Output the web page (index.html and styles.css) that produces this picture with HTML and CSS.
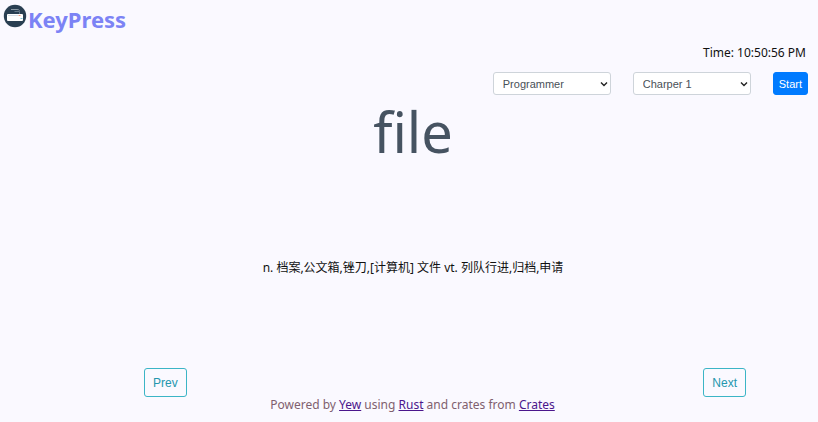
FILE: index.html
```html
<!DOCTYPE html>
<html lang="en">
<head>
<meta charset="utf-8">
<title>KeyPress</title>
<link rel="stylesheet" href="styles.css">
</head>
<body>
<header class="brand">
  <svg class="logo" viewBox="0 0 24 24" aria-hidden="true">
    <circle cx="12" cy="12" r="11.2" fill="#293f52"/>
    <path d="M8 5.500h6q2 0 2.500 1" fill="none" stroke="#8b99a5" stroke-width="1"/>
    <path d="M11.500 7.500h5v2.500" fill="none" stroke="#65798a" stroke-width="1"/>
    <rect x="4" y="10" width="16" height="7" rx="1" fill="#fff"/>
    <path d="M5 11.500h10" stroke="#d6dde5" stroke-width="1"/>
    <path d="M15.500 11.500h2" stroke="#ef9c7e" stroke-width="1"/>
    <path d="M17.500 14.500h2" stroke="#7bc5d8" stroke-width="1"/>
  </svg>
  <h1 class="title">KeyPress</h1>
</header>
<main class="main">
  <p class="time">Time: 10:50:56 PM</p>
  <form class="controls">
    <span class="field">
      <select class="select" aria-label="Dictionary"><option>Programmer</option></select>
      <svg class="chevron" viewBox="0 0 8 6" aria-hidden="true"><path d="M1 1.500l3 3 3-3"/></svg>
    </span>
    <span class="field">
      <select class="select" aria-label="Chapter"><option>Charper 1</option></select>
      <svg class="chevron" viewBox="0 0 8 6" aria-hidden="true"><path d="M1 1.500l3 3 3-3"/></svg>
    </span>
    <button class="start" type="button">Start</button>
  </form>
  <p class="word">file</p>
  <p class="meaning" lang="zh-CN">n. 档案,公文箱,锉刀,[计算机] 文件 vt. 列队行进,归档,申请</p>
  <nav class="pager">
    <button class="step" type="button">Prev</button>
    <button class="step" type="button">Next</button>
  </nav>
</main>
<footer class="footer">Powered by <a href="#yew">Yew</a> using <a href="#rust">Rust</a> and crates from <a href="#crates">Crates</a></footer>
</body>
</html>
```
FILE: styles.css
```css
* { box-sizing: border-box; }
body {
  margin: 0;
  min-height: 100vh;
  display: flex;
  flex-direction: column;
  background: #faf9ff;
  color: #111;
  font: 12px/20px "Noto Sans", "Noto Sans CJK SC", sans-serif;
}
h1, p { margin: 0; }
.brand {
  display: flex;
  align-items: flex-start;
  height: 40px;
  padding: 4px 0 0 3px;
}
.logo { width: 24px; height: 24px; }
.title { color: #7c83f5; font-size: 22px; line-height: 30px; padding-left: 1px; }
.main {
  flex: 1;
  display: flex;
  flex-direction: column;
}
.time { padding: 3px 12px 0; text-align: right; }
.controls {
  display: flex;
  justify-content: flex-end;
  gap: 22px;
  padding: 9px 10px 0;
}
.field { display: grid; align-items: center; }
.field > * { grid-area: 1 / 1; }
.select, .start {
  height: 23px;
  border-radius: 3px;
  font: 11px "Liberation Sans", sans-serif;
}
.select {
  appearance: none;
  width: 118px;
  padding: 0 16px 0 9px;
  border: 1px solid #ced4da;
  background: #fff;
  color: #495057;
}
.chevron {
  justify-self: end;
  width: 8px;
  height: 6px;
  margin-right: 3px;
  fill: none;
  stroke: #222;
  stroke-width: 1.4;
  pointer-events: none;
}
.start {
  padding: 0 5px;
  border: 1px solid #007bff;
  background: #007bff;
  color: #fff;
}
.word {
  padding-left: 8px;
  color: #465361;
  font-size: 56px;
  line-height: 72px;
  text-align: center;
}
.meaning { padding: 91px 0 0 8px; text-align: center; }
.pager {
  display: flex;
  justify-content: space-between;
  margin-top: auto;
  padding: 0 72px 0 144px;
}
.step {
  height: 29px;
  padding: 0 8px;
  border: 1px solid #3bb5c6;
  border-radius: 3px;
  background: transparent;
  color: #2497ad;
  font: 12px "Liberation Sans", sans-serif;
}
.footer {
  padding: 0 0 9px 7px;
  line-height: 16px;
  color: #80606e;
  text-align: center;
}
.footer a { color: #4b168c; }
```
